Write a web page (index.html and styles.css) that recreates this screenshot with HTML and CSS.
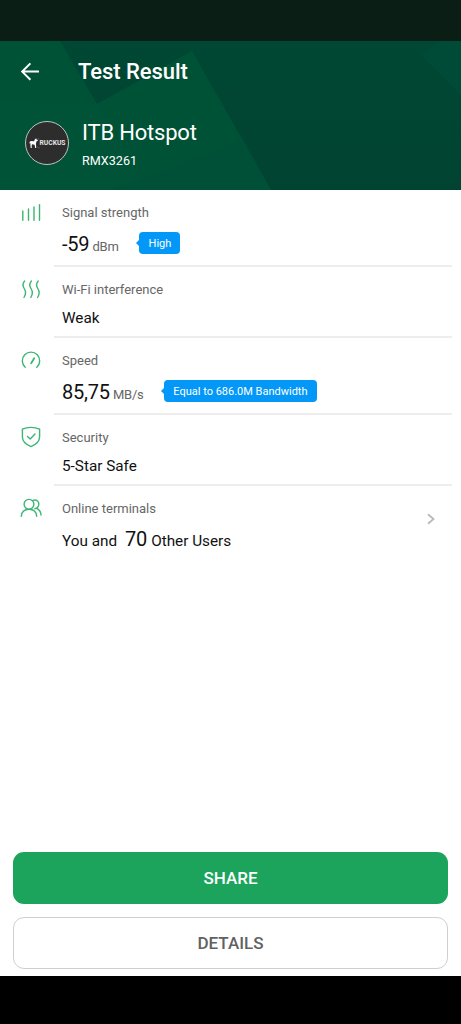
FILE: index.html
```html
<!DOCTYPE html>
<html lang="en">
<head>
<meta charset="utf-8">
<title>Test Result</title>
<link rel="stylesheet" href="styles.css">
</head>
<body>
<div class="screen">
  <div class="status-bar"></div>
  <header class="hero">
    <svg class="hero-art" viewBox="0 0 461 149" aria-hidden="true">
      <defs>
        <linearGradient id="base" x1="0" y1="0" x2="0" y2="1"><stop offset="0" stop-color="#004833"/><stop offset="1" stop-color="#004331"/></linearGradient>
      </defs>
      <rect width="461" height="149" fill="url(#base)"/>
      <path d="M0 0H60L97 63L192 10L271 149H0Z" fill="#005237"/>
      <path d="M97 63L146 149H0V60Z" fill="#005337" opacity=".5"/>
      <path d="M220 108L242 95L271 149H110Z" fill="#004e37" opacity=".5"/>
      <path d="M421 14L441 0H461V54Z" fill="#004b37"/>
    </svg>
    <div class="toolbar">
      <svg class="back" viewBox="0 0 20 20"><path d="M19 9.6H2.6M10.4 1.4L2.2 9.6L10.4 17.8"/></svg>
      <h1 class="title">Test Result</h1>
    </div>
    <div class="network">
      <div class="avatar">
        <svg class="dog" viewBox="0 0 11 11"><path d="M.6 3.8L2 3L5 3.3L6 1.2L7.2.3L7.5 1.4L9 2L8.4 3L7.4 3.5L7 5.5L7.2 10H6.2L5.6 6.7L3 6.3L2.6 8L2.8 10H1.7L1.4 7.5L1.5 5L.7 6Z" fill="#fff"/><path d="M9 1.1L10 .5M9.3 9.7H10.6M8.5 8.5L9 9.3" stroke="#a86b24" stroke-width=".8" fill="none"/></svg>
        <span class="brand">RUCKUS</span>
      </div>
      <div>
        <div class="ssid">ITB Hotspot</div>
        <div class="model">RMX3261</div>
      </div>
    </div>
  </header>
  <main class="list">
    <section class="row tall">
      <svg class="icon" viewBox="0 0 24 24"><path d="M2.8 10V19.2M8.5 8V19.2M14 6V19.2M19.5 3.6V19.2"/></svg>
      <div class="body">
        <div class="label">Signal strength</div>
        <div class="value"><span class="num signal">-59</span><span class="unit dbm">dBm</span><span class="tag high">High</span></div>
      </div>
    </section>
    <section class="row">
      <svg class="icon" viewBox="0 0 24 24"><path d="M4.6 3C2.2 5.8 2.5 7.8 4.2 10.5C6 13.3 6.2 16 4 19.5M11.4 3C9 5.8 9.3 7.8 11 10.5C12.8 13.3 13 16 10.8 19.5M18.2 3C15.8 5.8 16.1 7.8 17.8 10.5C19.6 13.3 19.8 16 17.6 19.5"/></svg>
      <div class="body">
        <div class="label interference">Wi-Fi interference</div>
        <div class="value weak">Weak</div>
      </div>
    </section>
    <section class="row tall">
      <svg class="icon" viewBox="0 0 24 24"><path d="M5.2 18.3A8.7 8.7 0 1 1 16.8 18.3"/><path class="needle" d="M14.2 9.2L11.2 14.3"/></svg>
      <div class="body">
        <div class="label">Speed</div>
        <div class="value"><span class="num speed">85,75</span><span class="unit mbs">MB/s</span><span class="tag bandwidth">Equal to 686.0M Bandwidth</span></div>
      </div>
    </section>
    <section class="row">
      <svg class="icon" viewBox="0 0 24 24"><path d="M11 1.4C14.2 1.4 17.2 2 19.6 3.1V10.8C19.6 16.2 15.5 18.8 11 20.6C6.5 18.8 2.4 16.2 2.4 10.8V3.1C4.8 2 7.8 1.4 11 1.4ZM7.5 10.6L10.2 13.1L15 8.1"/></svg>
      <div class="body">
        <div class="label">Security</div>
        <div class="value safe">5-Star Safe</div>
      </div>
    </section>
    <section class="row last">
      <svg class="icon" viewBox="0 0 24 24"><circle cx="9" cy="7.3" r="4.9"/><path d="M1.3 19.2C1.7 14.8 4.7 12.2 9 12.2S16.3 14.8 16.7 19.2M13 3.3C17 2.1 19 4.8 18.8 7.3C18.6 9.6 17 11.3 14.8 11.7M16.8 11.5C19.4 12.6 20.9 14.8 21 18.1"/></svg>
      <div class="body">
        <div class="label online">Online terminals</div>
        <div class="value users"><span class="you">You and</span><span class="num seventy">70</span><span class="others">Other Users</span></div>
      </div>
      <svg class="chevron" viewBox="0 0 10 14"><path d="M2 2.2L7.5 7L2 11.8"/></svg>
    </section>
  </main>
  <div class="actions">
    <button class="btn share">SHARE</button>
    <button class="btn details">DETAILS</button>
  </div>
  <div class="nav-bar"></div>
</div>
</body>
</html>
```
FILE: styles.css
```css
* { box-sizing: border-box; }
body { margin: 0; background: #fff; font-family: Roboto, "Liberation Sans", sans-serif; }
.screen { width: 461px; height: 1024px; display: flex; flex-direction: column; overflow: hidden; }
.status-bar { height: 41px; flex: none; background: #0b1e15; }
.hero { position: relative; isolation: isolate; height: 149px; flex: none; color: #fff; }
.hero-art { position: absolute; inset: 0; width: 461px; height: 149px; z-index: -1; }
.toolbar { display: flex; align-items: center; height: 62px; padding-left: 20px; }
.back { width: 20px; height: 20px; fill: none; stroke: #fff; stroke-width: 2; }
.title { margin: 0 0 0 38px; font-size: 22px; font-weight: 500; line-height: 28px; letter-spacing: -.05px; }
.network { display: flex; padding: 17px 0 0 25px; gap: 13px; }
.avatar { width: 44px; height: 44px; border-radius: 50%; border: 1.5px solid #b9c6c0; background: #2e2d2e; display: flex; align-items: center; justify-content: center; margin-top: 1px; }
.dog { width: 11px; height: 11px; flex: none; }
.brand { font-size: 6.7px; line-height: 9px; font-weight: 700; color: #e4e4e4; }
.ssid { font-size: 22px; line-height: 26px; letter-spacing: -.2px; }
.model { font-size: 12.6px; line-height: 16px; margin-top: 7px; }
.list { flex: 1; }
.row { height: 71px; display: grid; grid-template-columns: 54px 1fr; padding-right: 9px; }
.tall { height: 77px; }
.row.last { height: 80px; grid-template-columns: 54px 1fr auto; }
.icon { width: 24px; height: 24px; margin: 11px 0 0 20px; fill: none; stroke: #3cb673; stroke-width: 1.4; stroke-linecap: round; stroke-linejoin: round; }
.needle { stroke-width: 1.8; }
.body { border-bottom: 2px solid #ededed; padding: 14px 0 0 8px; }
.last .body { border: 0; }
.label { font-size: 13px; line-height: 17px; color: #666; }
.value { display: flex; align-items: baseline; font-size: 15.3px; line-height: 24px; margin-top: 8px; color: #111; white-space: nowrap; }
.tall .value { margin-top: 11px; }
.users { margin-top: 10px; }
.num { font-size: 20px; letter-spacing: -.2px; }
.unit { font-size: 13px; color: #666; margin-left: 3px; letter-spacing: -.2px; }
.tag { position: relative; align-self: center; height: 22px; margin-top: -5px; border-radius: 4px; background: #0398f8; color: #fff; font-size: 11px; line-height: 23px; text-align: center; }
.tag::before { content: ""; position: absolute; left: -3px; top: 8px; border: 3px solid transparent; border-right-color: #0398f8; border-left: 0; }
.dbm { width: 27px; }
.mbs { width: 31px; }
.high { width: 41px; margin-left: 20px; }
.bandwidth { width: 153px; margin-left: 20px; }
.seventy { margin: 0 4px 0 8px; }
.chevron { width: 10px; height: 14px; margin: 26px 16px 0 0; fill: none; stroke: #b9b9b9; stroke-width: 1.8; }
.actions { display: flex; flex-direction: column; gap: 13px; padding: 0 13px 7px; }
.btn { height: 52px; border: 0; border-radius: 11px; font: 500 17px/52px Roboto, sans-serif; padding: 0; }
.share { background: #1ca45c; color: #fff; }
.details { background: #fff; color: #616161; border: 1px solid #cfcfcf; line-height: 50px; }
.nav-bar { height: 48px; flex: none; background: #000; }
```
